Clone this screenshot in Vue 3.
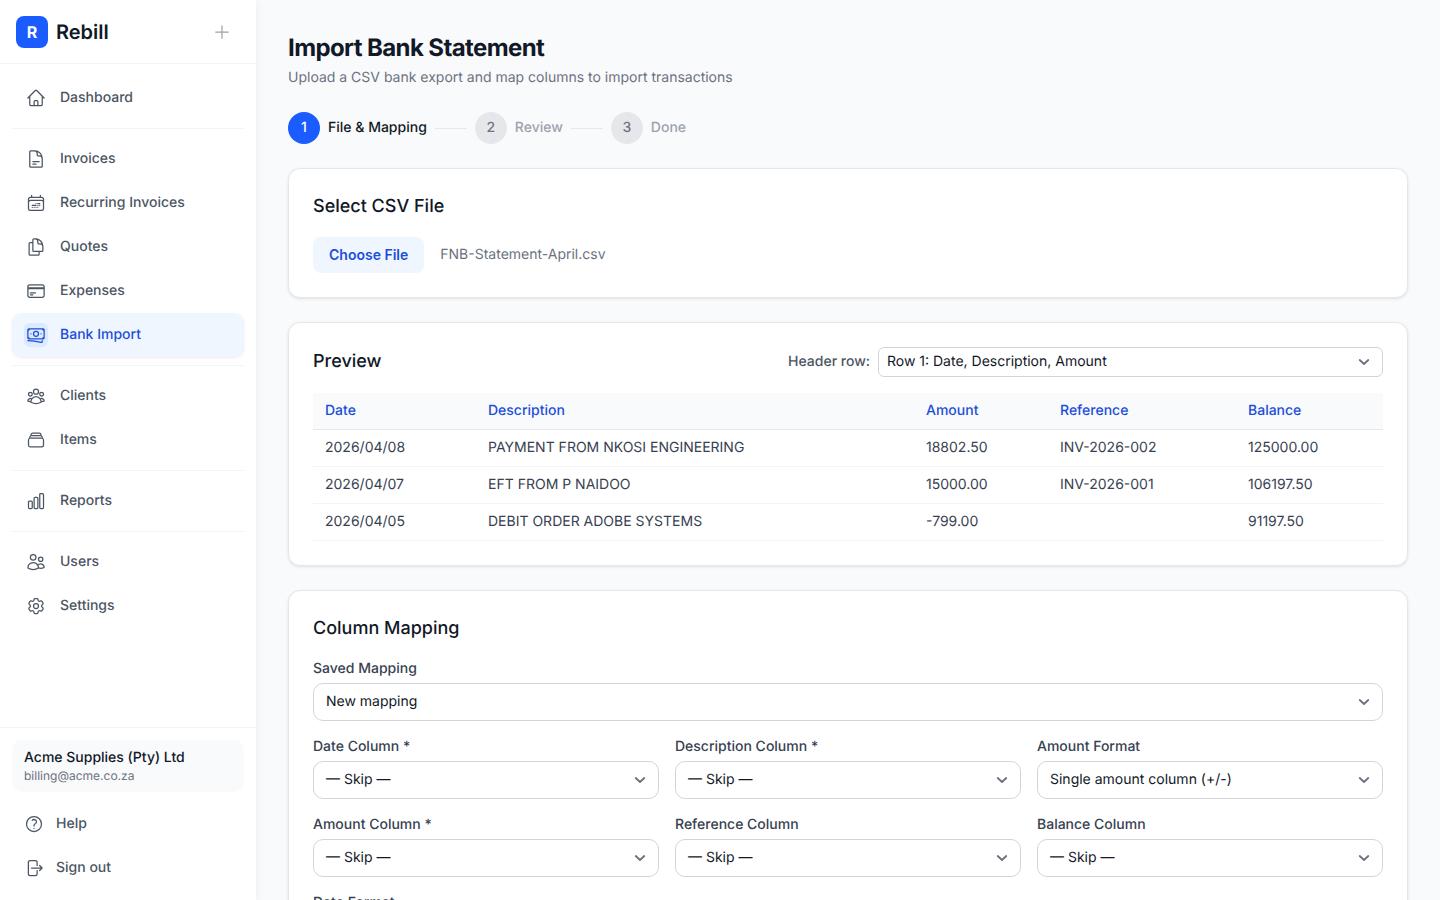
<script setup>
const icons = {
  home: "m2.25 12 8.954-8.955c.44-.439 1.152-.439 1.591 0L21.75 12M4.5 9.75v10.125c0 .621.504 1.125 1.125 1.125H9.75v-4.875c0-.621.504-1.125 1.125-1.125h2.25c.621 0 1.125.504 1.125 1.125V21h4.125c.621 0 1.125-.504 1.125-1.125V9.75M8.25 21h8.25",
  doc: "M19.5 14.25v-2.625a3.375 3.375 0 0 0-3.375-3.375h-1.5A1.125 1.125 0 0 1 13.5 7.125v-1.5a3.375 3.375 0 0 0-3.375-3.375H8.25m0 12.75h7.5m-7.5 3H12M10.5 2.25H5.625c-.621 0-1.125.504-1.125 1.125v17.25c0 .621.504 1.125 1.125 1.125h12.75c.621 0 1.125-.504 1.125-1.125V11.25a9 9 0 0 0-9-9Z",
  calendar: "M6.75 2.994v2.25m10.5-2.25v2.25m-14.252 13.5V7.491a2.25 2.25 0 0 1 2.25-2.25h13.5a2.25 2.25 0 0 1 2.25 2.25v11.251m-18 0a2.25 2.25 0 0 0 2.25 2.25h13.5a2.25 2.25 0 0 0 2.25-2.25m-18 0v-7.5a2.25 2.25 0 0 1 2.25-2.25h13.5a2.25 2.25 0 0 1 2.25 2.25v7.5m-6.75-6h2.25m-9 2.25h4.5m.002-2.25h.005v.006H12v-.006Zm-.001 4.5h.006v.006h-.006v-.005Zm-2.25.001h.005v.006H9.75v-.006Zm-2.25 0h.005v.005h-.006v-.005Zm6.75-2.247h.005v.005h-.005v-.005Zm0 2.247h.006v.006h-.006v-.006Zm2.25-2.248h.006V15H16.5v-.005Z",
  copy: "M15.75 17.25v3.375c0 .621-.504 1.125-1.125 1.125h-9.75a1.125 1.125 0 0 1-1.125-1.125V7.875c0-.621.504-1.125 1.125-1.125H6.75a9.06 9.06 0 0 1 1.5.124m7.5 10.376h3.375c.621 0 1.125-.504 1.125-1.125V11.25c0-4.46-3.243-8.161-7.5-8.876a9.06 9.06 0 0 0-1.5-.124H9.375c-.621 0-1.125.504-1.125 1.125v3.5m7.5 10.375H9.375a1.125 1.125 0 0 1-1.125-1.125v-9.25m12 6.625v-1.875a3.375 3.375 0 0 0-3.375-3.375h-1.5a1.125 1.125 0 0 1-1.125-1.125v-1.5a3.375 3.375 0 0 0-3.375-3.375H9.75",
  card: "M2.25 8.25h19.5M2.25 9h19.5m-16.5 5.25h6m-6 2.25h3m-3.75 3h15a2.25 2.25 0 0 0 2.25-2.25V6.75A2.25 2.25 0 0 0 19.5 4.5h-15a2.25 2.25 0 0 0-2.25 2.25v10.5A2.25 2.25 0 0 0 4.5 19.5Z",
  bank: "M2.25 18.75a60.07 60.07 0 0 1 15.797 2.101c.727.198 1.453-.342 1.453-1.096V18.75M3.75 4.5v.75A.75.75 0 0 1 3 6h-.75m0 0v-.375c0-.621.504-1.125 1.125-1.125H20.25M2.25 6v9m18-10.5v.75c0 .414.336.75.75.75h.75m-1.5-1.5h.375c.621 0 1.125.504 1.125 1.125v9.75c0 .621-.504 1.125-1.125 1.125h-.375m1.5-1.5H21a.75.75 0 0 0-.75.75v.75m0 0H3.75m0 0h-.375a1.125 1.125 0 0 1-1.125-1.125V15m1.5 1.5v-.75A.75.75 0 0 0 3 15h-.75M15 10.5a3 3 0 1 1-6 0 3 3 0 0 1 6 0Zm3 0h.008v.008H18V10.5Zm-12 0h.008v.008H6V10.5Z",
  group: "M18 18.72a9.094 9.094 0 0 0 3.741-.479 3 3 0 0 0-4.682-2.72m.94 3.198.001.031c0 .225-.012.447-.037.666A11.944 11.944 0 0 1 12 21c-2.17 0-4.207-.576-5.963-1.584A6.062 6.062 0 0 1 6 18.719m12 0a5.971 5.971 0 0 0-.941-3.197m0 0A5.995 5.995 0 0 0 12 12.75a5.995 5.995 0 0 0-5.058 2.772m0 0a3 3 0 0 0-4.681 2.72 8.986 8.986 0 0 0 3.74.477m.94-3.197a5.971 5.971 0 0 0-.94 3.197M15 6.75a3 3 0 1 1-6 0 3 3 0 0 1 6 0Zm6 3a2.25 2.25 0 1 1-4.5 0 2.25 2.25 0 0 1 4.5 0Zm-13.5 0a2.25 2.25 0 1 1-4.5 0 2.25 2.25 0 0 1 4.5 0Z",
  stack: "M6 6.878V6a2.25 2.25 0 0 1 2.25-2.25h7.5A2.25 2.25 0 0 1 18 6v.878m-12 0c.235-.083.487-.128.75-.128h10.5c.263 0 .515.045.75.128m-12 0A2.25 2.25 0 0 0 4.5 9v.878m13.5-3A2.25 2.25 0 0 1 19.5 9v.878m0 0a2.246 2.246 0 0 0-.75-.128H5.25c-.263 0-.515.045-.75.128m15 0A2.25 2.25 0 0 1 21 12v6a2.25 2.25 0 0 1-2.25 2.25H5.25A2.25 2.25 0 0 1 3 18v-6c0-.98.626-1.813 1.5-2.122",
  chart: "M3 13.125C3 12.504 3.504 12 4.125 12h2.25c.621 0 1.125.504 1.125 1.125v6.75C7.5 20.496 6.996 21 6.375 21h-2.25A1.125 1.125 0 0 1 3 19.875v-6.75ZM9.75 8.625c0-.621.504-1.125 1.125-1.125h2.25c.621 0 1.125.504 1.125 1.125v11.25c0 .621-.504 1.125-1.125 1.125h-2.25a1.125 1.125 0 0 1-1.125-1.125V8.625ZM16.5 4.125c0-.621.504-1.125 1.125-1.125h2.25C20.496 3 21 3.504 21 4.125v15.75c0 .621-.504 1.125-1.125 1.125h-2.25a1.125 1.125 0 0 1-1.125-1.125V4.125Z",
  users: "M15 19.128a9.38 9.38 0 0 0 2.625.372 9.337 9.337 0 0 0 4.121-.952 4.125 4.125 0 0 0-7.533-2.493M15 19.128v-.003c0-1.113-.285-2.16-.786-3.07M15 19.128v.106A12.318 12.318 0 0 1 8.624 21c-2.331 0-4.512-.645-6.374-1.766l-.001-.109a6.375 6.375 0 0 1 11.964-3.07M12 6.375a3.375 3.375 0 1 1-6.75 0 3.375 3.375 0 0 1 6.75 0Zm8.25 2.25a2.625 2.625 0 1 1-5.25 0 2.625 2.625 0 0 1 5.25 0Z",
  cog: "M9.594 3.94c.09-.542.56-.94 1.11-.94h2.593c.55 0 1.02.398 1.11.94l.213 1.281c.063.374.313.686.645.87.074.04.147.083.22.127.325.196.72.257 1.075.124l1.217-.456a1.125 1.125 0 0 1 1.37.49l1.296 2.247a1.125 1.125 0 0 1-.26 1.431l-1.003.827c-.293.241-.438.613-.43.992a7.723 7.723 0 0 1 0 .255c-.008.378.137.75.43.991l1.004.827c.424.35.534.955.26 1.43l-1.298 2.247a1.125 1.125 0 0 1-1.369.491l-1.217-.456c-.355-.133-.75-.072-1.076.124a6.47 6.47 0 0 1-.22.128c-.331.183-.581.495-.644.869l-.213 1.281c-.09.543-.56.94-1.11.94h-2.594c-.55 0-1.019-.398-1.11-.94l-.213-1.281c-.062-.374-.312-.686-.644-.87a6.52 6.52 0 0 1-.22-.127c-.325-.196-.72-.257-1.076-.124l-1.217.456a1.125 1.125 0 0 1-1.369-.49l-1.297-2.247a1.125 1.125 0 0 1 .26-1.431l1.004-.827c.292-.24.437-.613.43-.991a6.932 6.932 0 0 1 0-.255c.007-.38-.138-.751-.43-.992l-1.004-.827a1.125 1.125 0 0 1-.26-1.43l1.297-2.247a1.125 1.125 0 0 1 1.37-.491l1.216.456c.356.133.751.072 1.076-.124.072-.044.146-.086.22-.128.332-.183.582-.495.644-.869l.214-1.28ZM15 12a3 3 0 1 1-6 0 3 3 0 0 1 6 0Z",
  help: "M9.879 7.519c1.171-1.025 3.071-1.025 4.242 0 1.172 1.025 1.172 2.687 0 3.712-.203.179-.43.326-.67.442-.745.361-1.45.999-1.45 1.827v.75M21 12a9 9 0 1 1-18 0 9 9 0 0 1 18 0Zm-9 5.25h.008v.008H12v-.008Z",
  signout: "M15.75 9V5.25A2.25 2.25 0 0 0 13.5 3h-6a2.25 2.25 0 0 0-2.25 2.25v13.5A2.25 2.25 0 0 0 7.5 21h6a2.25 2.25 0 0 0 2.25-2.25V15m3 0 3-3m0 0-3-3m3 3H9",
};

const navGroups = [
  [{ label: "Dashboard", icon: "home" }],
  [
    { label: "Invoices", icon: "doc" },
    { label: "Recurring Invoices", icon: "calendar" },
    { label: "Quotes", icon: "copy" },
    { label: "Expenses", icon: "card" },
    { label: "Bank Import", icon: "bank", active: true },
  ],
  [
    { label: "Clients", icon: "group" },
    { label: "Items", icon: "stack" },
  ],
  [{ label: "Reports", icon: "chart" }],
  [
    { label: "Users", icon: "users" },
    { label: "Settings", icon: "cog" },
  ],
];

const steps = [
  { n: 1, label: "File & Mapping", active: true },
  { n: 2, label: "Review" },
  { n: 3, label: "Done" },
];

const columns = ["Date", "Description", "Amount", "Reference", "Balance"];
const rows = [
  ["2026/04/08", "PAYMENT FROM NKOSI ENGINEERING", "18802.50", "INV-2026-002", "125000.00"],
  ["2026/04/07", "EFT FROM P NAIDOO", "15000.00", "INV-2026-001", "106197.50"],
  ["2026/04/05", "DEBIT ORDER ADOBE SYSTEMS", "-799.00", "", "91197.50"],
];

const fields = [
  { label: "Date Column *", value: "— Skip —" },
  { label: "Description Column *", value: "— Skip —" },
  { label: "Amount Format", value: "Single amount column (+/-)" },
  { label: "Amount Column *", value: "— Skip —" },
  { label: "Reference Column", value: "— Skip —" },
  { label: "Balance Column", value: "— Skip —" },
  { label: "Date Format", value: "YYYY/MM/DD" },
];
</script>

<template>
  <div class="app">
    <aside class="sidebar">
      <div class="brand">
        <div class="logo">R</div>
        <span class="brand-name">Rebill</span>
        <svg class="plus" viewBox="0 0 24 24" fill="none" stroke="currentColor" stroke-width="1.5" stroke-linecap="round">
          <path d="M12 4.5v15m7.5-7.5h-15" />
        </svg>
      </div>

      <nav class="nav">
        <template v-for="(group, i) in navGroups" :key="i">
          <div v-if="i > 0" class="nav-divider"></div>
          <a v-for="item in group" :key="item.label" class="nav-item" :class="{ active: item.active }">
            <span class="nav-icon">
              <svg viewBox="0 0 24 24" fill="none" stroke="currentColor" stroke-width="1.5" stroke-linecap="round" stroke-linejoin="round">
                <path :d="icons[item.icon]" />
              </svg>
            </span>
            {{ item.label }}
          </a>
        </template>
      </nav>

      <div class="side-foot">
        <div class="company">
          <div class="company-name">Acme Supplies (Pty) Ltd</div>
          <div class="company-mail">billing@acme.co.za</div>
        </div>
        <a class="foot-item">
          <svg viewBox="0 0 24 24" fill="none" stroke="currentColor" stroke-width="1.5" stroke-linecap="round" stroke-linejoin="round">
            <path :d="icons.help" />
          </svg>
          Help
        </a>
        <a class="foot-item">
          <svg viewBox="0 0 24 24" fill="none" stroke="currentColor" stroke-width="1.5" stroke-linecap="round" stroke-linejoin="round">
            <path :d="icons.signout" />
          </svg>
          Sign out
        </a>
      </div>
    </aside>

    <main class="main">
      <h1 class="page-title">Import Bank Statement</h1>
      <p class="page-sub">Upload a CSV bank export and map columns to import transactions</p>

      <div class="stepper">
        <template v-for="(step, i) in steps" :key="step.n">
          <div v-if="i > 0" class="step-line"></div>
          <div class="step-num" :class="{ active: step.active }">{{ step.n }}</div>
          <div class="step-label" :class="{ active: step.active }">{{ step.label }}</div>
        </template>
      </div>

      <section class="card">
        <h2 class="card-title">Select CSV File</h2>
        <div class="file-row">
          <button class="file-btn">Choose File</button>
          <span class="file-name">FNB-Statement-April.csv</span>
        </div>
      </section>

      <section class="card">
        <div class="preview-head">
          <h2 class="card-title flat">Preview</h2>
          <label class="header-label">Header row:</label>
          <div class="select small">
            <span>Row 1: Date, Description, Amount</span>
            <svg viewBox="0 0 20 20" fill="none" stroke="currentColor" stroke-width="1.8" stroke-linecap="round" stroke-linejoin="round">
              <path d="m5.75 8 4.25 4 4.25-4" />
            </svg>
          </div>
        </div>
        <table class="preview-table">
          <thead>
            <tr>
              <th v-for="col in columns" :key="col">{{ col }}</th>
            </tr>
          </thead>
          <tbody>
            <tr v-for="row in rows" :key="row[0]">
              <td v-for="(cell, i) in row" :key="i">{{ cell }}</td>
            </tr>
          </tbody>
        </table>
      </section>

      <section class="card">
        <h2 class="card-title">Column Mapping</h2>
        <div class="field">
          <label>Saved Mapping</label>
          <div class="select">
            <span>New mapping</span>
            <svg viewBox="0 0 20 20" fill="none" stroke="currentColor" stroke-width="1.8" stroke-linecap="round" stroke-linejoin="round">
              <path d="m5.75 8 4.25 4 4.25-4" />
            </svg>
          </div>
        </div>
        <div class="field-grid">
          <div v-for="field in fields" :key="field.label" class="field">
            <label>{{ field.label }}</label>
            <div class="select">
              <span>{{ field.value }}</span>
              <svg viewBox="0 0 20 20" fill="none" stroke="currentColor" stroke-width="1.8" stroke-linecap="round" stroke-linejoin="round">
                <path d="m5.75 8 4.25 4 4.25-4" />
              </svg>
            </div>
          </div>
        </div>
      </section>
    </main>
  </div>
</template>

<style>
html,
body {
  margin: 0;
  height: 100%;
  overflow: hidden;
}
</style>

<style scoped>
.app {
  display: flex;
  height: 100vh;
  overflow: hidden;
  background: #f9fafb;
  font-family: Inter, "Liberation Sans", sans-serif;
  font-size: 14px;
  line-height: 20px;
  color: #111827;
  text-rendering: geometricPrecision;
}

.sidebar {
  width: 256px;
  flex: none;
  display: flex;
  flex-direction: column;
  box-sizing: border-box;
  background: #fff;
  position: relative;
  z-index: 1;
  box-shadow: 1px 0 8px rgba(0, 0, 0, 0.05);
}

.brand {
  height: 64px;
  box-sizing: border-box;
  flex: none;
  display: flex;
  align-items: center;
  padding: 0 24px 0 16px;
  border-bottom: 1px solid #f3f4f6;
}

.logo {
  width: 32px;
  height: 32px;
  border-radius: 8px;
  background: #1a5cff;
  color: #fff;
  font-size: 16px;
  font-weight: 700;
  display: flex;
  align-items: center;
  justify-content: center;
}

.brand-name {
  margin-left: 8px;
  font-size: 20px;
  line-height: 28px;
  font-weight: 600;
  flex: 1;
}

.plus {
  width: 20px;
  height: 20px;
  color: #9ca3af;
}

.nav {
  flex: 1;
  padding: 12px 12px 0;
}

.nav-divider {
  height: 1px;
  margin: 8px 0;
  background: #f3f4f6;
}

.nav-item {
  height: 44px;
  box-sizing: border-box;
  display: flex;
  align-items: center;
  gap: 12px;
  padding: 0 12px;
  border-radius: 10px;
  color: #4b5563;
  font-weight: 500;
}

.nav-item.active {
  background: #eff6ff;
  color: #1d4ed8;
  box-shadow: 0 1px 3px rgba(0, 0, 0, 0.08);
}

.nav-icon {
  width: 24px;
  height: 24px;
  border-radius: 6px;
  display: flex;
  align-items: center;
  justify-content: center;
}

.nav-icon svg {
  width: 20px;
  height: 20px;
}

.nav-item.active .nav-icon {
  background: #dbeafe;
}

.side-foot {
  flex: none;
  padding: 12px 12px 10px;
  border-top: 1px solid #f3f4f6;
}

.company {
  height: 52px;
  box-sizing: border-box;
  padding: 8px 12px;
  margin-bottom: 10px;
  background: #f9fafb;
  border-radius: 10px;
}

.company-name {
  font-weight: 500;
}

.company-mail {
  font-size: 12px;
  line-height: 16px;
  color: #6b7280;
}

.foot-item {
  height: 44px;
  display: flex;
  align-items: center;
  gap: 12px;
  padding: 0 12px;
  color: #4b5563;
  font-weight: 500;
}

.foot-item svg {
  width: 20px;
  height: 20px;
}

.main {
  flex: 1;
  min-width: 0;
  padding: 32px;
  overflow: hidden;
}

.page-title {
  margin: 0;
  font-size: 24px;
  line-height: 32px;
  font-weight: 700;
  letter-spacing: -0.025em;
}

.page-sub {
  margin: 4px 0 0;
  color: #6b7280;
}

.stepper {
  display: flex;
  align-items: center;
  gap: 8px;
  margin: 24px 0;
}

.step-num {
  width: 32px;
  height: 32px;
  border-radius: 50%;
  background: #e5e7eb;
  color: #6b7280;
  font-weight: 500;
  display: flex;
  align-items: center;
  justify-content: center;
}

.step-num.active {
  background: #1a5cff;
  color: #fff;
}

.step-label {
  color: #9ca3af;
  font-weight: 500;
}

.step-label.active {
  color: #111827;
}

.step-line {
  width: 32px;
  height: 1px;
  background: #e5e7eb;
}

.card {
  background: #fff;
  border: 1px solid #e5e7eb;
  border-radius: 12px;
  padding: 24px;
  margin-bottom: 24px;
  box-shadow: 0 1px 3px rgba(0, 0, 0, 0.1);
}

.card-title {
  margin: 0 0 16px;
  font-size: 18px;
  line-height: 28px;
  font-weight: 500;
}

.card-title.flat {
  margin: 0;
  flex: 1;
}

.file-row {
  display: flex;
  align-items: center;
  gap: 16px;
}

.file-btn {
  height: 36px;
  padding: 0 16px;
  border: 0;
  border-radius: 8px;
  background: #eff6ff;
  color: #1d4ed8;
  font: inherit;
  font-weight: 600;
}

.file-name {
  color: #6b7280;
}

.preview-head {
  display: flex;
  align-items: center;
  gap: 8px;
  height: 30px;
  margin-bottom: 16px;
}

.header-label {
  color: #4b5563;
  font-weight: 500;
}

.preview-table {
  width: 100%;
  border-collapse: separate;
  border-spacing: 0;
  table-layout: fixed;
}

.preview-table th,
.preview-table td {
  height: 37px;
  box-sizing: border-box;
  padding: 0 12px;
  text-align: left;
  border-bottom: 1px solid #e5e7eb;
}

.preview-table th {
  background: #f8fafc;
  color: #1d4ed8;
  font-weight: 500;
}

.preview-table td {
  color: #374151;
  border-bottom-color: #f3f4f6;
}

.preview-table th:nth-child(1) {
  width: 163px;
}

.preview-table th:nth-child(2) {
  width: 438px;
}

.preview-table th:nth-child(3) {
  width: 134px;
}

.preview-table th:nth-child(4) {
  width: 188px;
}

.field {
  display: flex;
  flex-direction: column;
  gap: 4px;
}

.field label {
  color: #374151;
  font-weight: 500;
}

.field-grid {
  display: grid;
  grid-template-columns: repeat(3, 1fr);
  gap: 16px;
  margin-top: 16px;
}

.select {
  height: 38px;
  box-sizing: border-box;
  display: flex;
  align-items: center;
  justify-content: space-between;
  padding: 0 8px 0 12px;
  background: #fff;
  border: 1px solid #d1d5db;
  border-radius: 10px;
  color: #111827;
}

.select svg {
  width: 20px;
  height: 20px;
  color: #6b7280;
}

.select.small {
  width: 505px;
  height: 30px;
  padding-left: 8px;
  border-radius: 6px;
}
</style>
